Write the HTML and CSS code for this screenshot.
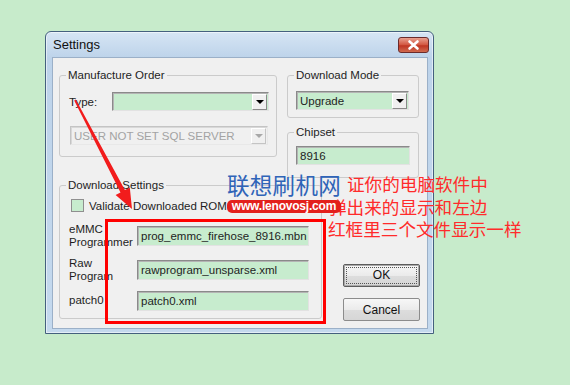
FILE: index.html
```html
<!DOCTYPE html>
<html>

<head>
	<title>Settings</title>
	<meta charset="utf-8">
	<link rel="stylesheet" href="styles.css">
</head>

<body>
	<div class="stage">
		<div class="window">
			<div class="titlebar">
				<span class="title">Settings</span>
				<span class="close-btn">
					<svg width="31" height="16" viewBox="0 0 31 16">
						<path d="M11.5 4.5 L19.5 11.5 M19.5 4.5 L11.5 11.5" stroke="#fff" stroke-width="2.6" stroke-linecap="round" />
					</svg>
				</span>
			</div>
			<div class="content">
				<div class="top-row">
					<fieldset class="group group-order">
						<legend>Manufacture Order</legend>
						<div class="type-row">
							<span class="type-label">Type:</span>
							<div class="combo combo-type"><span class="combo-text"></span><span class="drop"></span></div>
						</div>
						<div class="combo combo-disabled"><span class="combo-text">USER NOT SET SQL SERVER</span><span class="drop"></span></div>
					</fieldset>
					<div class="right-col">
						<fieldset class="group group-mode">
							<legend>Download Mode</legend>
							<div class="combo combo-mode"><span class="combo-text">Upgrade</span><span class="drop"></span></div>
						</fieldset>
						<fieldset class="group group-chip">
							<legend>Chipset</legend>
							<div class="field field-chip">8916</div>
						</fieldset>
					</div>
				</div>
				<div class="bottom-row">
					<fieldset class="group group-download">
						<legend>Download Settings</legend>
						<div class="check-row"><span class="checkbox"></span>Validate Downloaded ROM</div>
						<div class="files">
							<span class="file-label">eMMC<br>Programmer</span>
							<div class="field">prog_emmc_firehose_8916.mbn</div>
							<span class="file-label">Raw<br>Program</span>
							<div class="field">rawprogram_unsparse.xml</div>
							<span class="file-label">patch0</span>
							<div class="field">patch0.xml</div>
						</div>
					</fieldset>
					<div class="buttons">
						<button class="btn btn-default"><span class="focus">OK</span></button>
						<button class="btn">Cancel</button>
					</div>
				</div>
			</div>
		</div>

		<!-- пометки поверх скриншота -->
		<div class="red-box"></div>
		<svg class="arrow" width="570" height="385" viewBox="0 0 570 385">
			<polygon points="74.2,100.6 75.8,99.4 124.9,190.1 129.8,187.6 132,209 115.6,195 120.5,192.5" fill="#f21c1c" />
		</svg>
		<div class="note">
			<div class="note-line note-first">证你的电脑软件中</div>
			<div class="note-line note-second">弹出来的显示和左边</div>
			<div class="note-line">红框里三个文件显示一样</div>
		</div>
		<div class="watermark">联想刷机网</div>
		<div class="site">www.lenovosj.com</div>
	</div>
</body>

</html>
```

FILE: styles.css
```css
body {
	margin: 0;
	background-color: #c7ebcb;
	font-family: "Liberation Sans", Arial, sans-serif;
	font-size: 11.5px;
	color: #1e1e1e;
}

.stage {
	position: relative;
	width: 570px;
	height: 385px;
	overflow: hidden;
	box-sizing: border-box;
	padding: 31px 0 0 45px;
}

/* окно диалога */
.window {
	width: 389px;
	height: 303px;
	box-sizing: border-box;
	border: 1px solid #44607e;
	border-radius: 6px 6px 0 0;
	background: linear-gradient(#d6e5f4, #bdd3ea 26px, #c4d9ee);
	box-shadow: inset 0 0 0 1px rgba(255, 255, 255, 0.55);
}

.titlebar {
	display: flex;
	align-items: flex-start;
	justify-content: space-between;
	height: 25px;
	padding: 0 4px 0 7px;
}

.title {
	font-size: 13px;
	line-height: 25px;
	color: #111;
}

.close-btn {
	display: block;
	width: 31px;
	height: 16px;
	margin-top: 5px;
	border: 1px solid #6b2b2b;
	border-radius: 3px;
	box-sizing: border-box;
	background: linear-gradient(#e9a08f, #d2553f 50%, #bf3522 55%, #d06a4f);
}

.close-btn svg {
	display: block;
	margin: -1px 0 0 -1px;
}

.content {
	margin: 0 5px 0 6px;
	height: 272px;
	box-sizing: border-box;
	border: 1px solid #9bb0c8;
	background-color: #f0f0f0;
	padding: 10px 0 0 6px;
}

/* рамки групп */
.group {
	margin: 0;
	padding: 0;
	min-width: 0;
	box-sizing: border-box;
	border: 1px solid #cbcbcb;
	border-radius: 3px;
}

.group legend {
	margin-left: 6px;
	padding: 0 2px;
	font-size: 11.5px;
	line-height: 14px;
}

.top-row {
	display: flex;
	gap: 10px;
	height: 110px;
}

.group-order {
	width: 218px;
	height: 89px;
}

.type-row {
	display: flex;
	align-items: center;
	margin: 10px 0 0 9px;
}

.type-label {
	width: 43px;
}

.right-col {
	display: flex;
	flex-direction: column;
	gap: 7px;
	width: 132px;
}

.group-mode {
	height: 52px;
}

.group-chip {
	height: 55px;
}

/* выпадающие списки и поля */
.combo {
	display: flex;
	align-items: center;
	height: 19px;
	box-sizing: border-box;
	border: 1px solid;
	border-color: #8a8a8a #e2e2e2 #e2e2e2 #8a8a8a;
	box-shadow: inset 1px 1px 0 #b4b4b4;
	background-color: #c7ecce;
}

.combo-text {
	flex: 1;
	padding-left: 3px;
	white-space: nowrap;
	overflow: hidden;
}

.drop {
	position: relative;
	width: 15px;
	height: 16px;
	margin-right: 1px;
	box-sizing: border-box;
	border: 1px solid;
	border-color: #fff #8a8a8a #8a8a8a #fff;
	background-color: #f0f0f0;
}

.drop::after {
	content: "";
	position: absolute;
	left: 3px;
	top: 5px;
	border-left: 4px solid transparent;
	border-right: 4px solid transparent;
	border-top: 4px solid #000;
}

.combo-type {
	width: 157px;
}

.combo-disabled {
	width: 198px;
	margin: 15px 0 0 10px;
	background-color: #f0f0f0;
	border-color: #c4c4c4 #e8e8e8 #e8e8e8 #c4c4c4;
	box-shadow: inset 1px 1px 0 #d8d8d8;
	color: #a3a3a3;
}

.combo-disabled .drop {
	border-color: #fff #c4c4c4 #c4c4c4 #fff;
}

.combo-disabled .drop::after {
	border-top-color: #a8a8a8;
}

.combo-mode {
	width: 113px;
	margin: 9px 0 0 8px;
}

.field {
	height: 20px;
	line-height: 18px;
	box-sizing: border-box;
	padding-left: 3px;
	border: 1px solid;
	border-color: #8a8a8a #e2e2e2 #e2e2e2 #8a8a8a;
	box-shadow: inset 1px 1px 0 #b4b4b4;
	background-color: #c7ecce;
	white-space: nowrap;
}

.field-chip {
	width: 114px;
	height: 19px;
	margin: 7px 0 0 8px;
}

/* нижняя часть */
.bottom-row {
	display: flex;
}

.group-download {
	width: 263px;
	height: 141px;
}

.check-row {
	display: flex;
	align-items: center;
	gap: 5px;
	margin: 7px 0 0 11px;
	height: 13px;
}

.checkbox {
	width: 13px;
	height: 13px;
	box-sizing: border-box;
	border: 1px solid #8f8f8f;
	background-color: #c7ecce;
}

.files {
	display: grid;
	grid-template-columns: 68px 172px;
	grid-template-rows: 32px 35px 27px;
	align-items: center;
	margin: 8px 0 0 9px;
}

.file-label {
	line-height: 13px;
}

.buttons {
	display: flex;
	flex-direction: column;
	gap: 11px;
	margin: 86px 0 0 21px;
}

.btn {
	width: 77px;
	height: 23px;
	padding: 0;
	border: 1px solid #8c8c8c;
	border-radius: 2px;
	background: linear-gradient(#f7f7f7, #ebebeb 50%, #dddddd 51%, #d6d6d6);
	font-family: "Liberation Sans", Arial, sans-serif;
	font-size: 12px;
	color: #111;
}

.btn-default {
	border-color: #5c5c5c;
	box-shadow: inset 0 0 0 1px #a9a9a9;
}

.btn-default .focus {
	display: block;
	margin: 2px;
	height: 15px;
	line-height: 15px;
	border: 1px dotted #555;
}

/* красная рамка и стрелка */
.red-box {
	position: absolute;
	left: 105px;
	top: 219px;
	width: 221px;
	height: 105px;
	box-sizing: border-box;
	border: 3px solid #f00;
}

.arrow {
	position: absolute;
	left: 0;
	top: 0;
}

.note {
	position: absolute;
	left: 328px;
	top: 173px;
	font-family: "Noto Sans CJK SC", sans-serif;
	font-size: 17.6px;
	line-height: 22.5px;
	color: #ff2b2b;
	white-space: nowrap;
}

.note-first {
	padding-left: 19px;
}

.note-second {
	padding-left: 1px;
}

.watermark {
	position: absolute;
	left: 227px;
	top: 171px;
	font-family: "Noto Sans CJK SC", sans-serif;
	font-size: 22.5px;
	line-height: 26px;
	color: #2f64b8;
	letter-spacing: 0.3px;
}

.site {
	position: absolute;
	left: 227px;
	top: 200px;
	width: 114px;
	height: 13px;
	box-sizing: border-box;
	border-radius: 5px;
	background-color: #e3201c;
	color: #fff;
	font-family: "Liberation Sans", Arial, sans-serif;
	font-weight: bold;
	font-size: 12px;
	line-height: 13px;
	text-align: center;
	letter-spacing: -0.2px;
}
```
